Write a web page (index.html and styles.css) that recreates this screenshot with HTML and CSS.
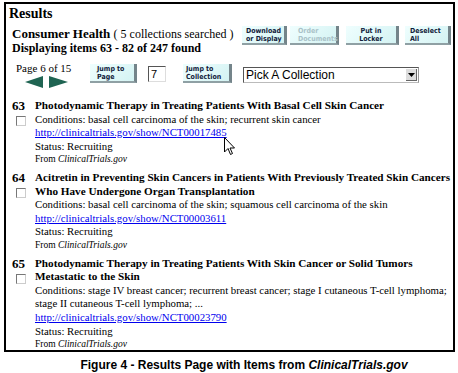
FILE: index.html
```html
<!DOCTYPE html>
<html lang="en">
<head>
  <meta charset="UTF-8">
  <title>Results</title>
  <link rel="stylesheet" href="styles.css">
</head>
<body>
  <div class="frame">
    <div class="heading">Results</div>

    <div class="top-row">
      <div class="summary">
        <div class="coll"><b>Consumer Health</b> <span class="searched">( 5 collections searched )</span></div>
        <div class="count">Displaying items 63 - 82 of 247 found</div>
      </div>
      <div class="actions">
        <span class="btn dl">Download<br>or Display</span>
        <span class="btn order off">Order<br>Documents</span>
        <span class="btn locker">Put in<br>Locker</span>
        <span class="btn desel">Deselect<br>All</span>
      </div>
    </div>

    <div class="nav-row">
      <div class="pager">
        <div class="page-of">Page 6 of 15</div>
        <div class="arrows">
          <svg width="18" height="12" viewBox="0 0 18 12"><polygon points="0,6 18,0 18,12" fill="#1f6452"/></svg>
          <svg width="19" height="12" viewBox="0 0 19 12"><polygon points="19,6 0,0 0,12" fill="#1f6452"/></svg>
        </div>
      </div>
      <span class="btn jump-page">Jump to<br>Page</span>
      <input class="page-input" type="text" value="7">
      <span class="btn jump-coll">Jump to<br>Collection</span>
      <div class="select">
        <span>Pick A Collection</span>
        <span class="drop"><svg width="7" height="4" viewBox="0 0 7 4"><polygon points="0,0 7,0 3.5,4" fill="#000"/></svg></span>
      </div>
    </div>

    <div class="item first">
      <div class="num">63</div>
      <div class="body">
        <div class="title">Photodynamic Therapy in Treating Patients With Basal Cell Skin Cancer</div>
        <div>Conditions: basal cell carcinoma of the skin; recurrent skin cancer</div>
        <div><a href="#">http://clinicaltrials.gov/show/NCT00017485</a></div>
        <div>Status: Recruiting</div>
        <div class="from">From <i>ClinicalTrials.gov</i></div>
      </div>
      <span class="box"></span>
    </div>

    <div class="item">
      <div class="num">64</div>
      <div class="body">
        <div class="title">Acitretin in Preventing Skin Cancers in Patients With Previously Treated Skin Cancers Who Have Undergone Organ Transplantation</div>
        <div>Conditions: basal cell carcinoma of the skin; squamous cell carcinoma of the skin</div>
        <div><a href="#">http://clinicaltrials.gov/show/NCT00003611</a></div>
        <div>Status: Recruiting</div>
        <div class="from">From <i>ClinicalTrials.gov</i></div>
      </div>
      <span class="box"></span>
    </div>

    <div class="item">
      <div class="num">65</div>
      <div class="body">
        <div class="title">Photodynamic Therapy in Treating Patients With Skin Cancer or Solid Tumors Metastatic to the Skin</div>
        <div>Conditions: stage IV breast cancer; recurrent breast cancer; stage I cutaneous T-cell lymphoma; stage II cutaneous T-cell lymphoma; ...</div>
        <div><a href="#">http://clinicaltrials.gov/show/NCT00023790</a></div>
        <div>Status: Recruiting</div>
        <div class="from">From <i>ClinicalTrials.gov</i></div>
      </div>
      <span class="box"></span>
    </div>

    <svg class="cursor" width="12" height="19" viewBox="0 0 12 19"><polygon points="0.5,0.5 0.5,15 4,11.5 6.5,17.5 8.5,16.5 6,11 10.5,11" fill="#fff" stroke="#000" stroke-width="1"/></svg>
  </div>

  <div class="caption">Figure 4 - Results Page with Items from <i>ClinicalTrials.gov</i></div>
</body>
</html>
```

FILE: styles.css
```css
body {
  margin: 0;
  background: #fff;
  font-family: "Liberation Serif", "Times New Roman", serif;
  font-size: 12px;
  color: #000;
}
.frame {
  position: relative;
  margin: 2px 3px 0 4px;
  border: 2px solid #000;
  height: 346px;
  padding: 0 2px 0 3px;
  overflow: hidden;
}
.heading {
  font-weight: bold;
  font-size: 14px;
  line-height: 18px;
  padding-top: 1px;
}
.top-row {
  display: flex;
  justify-content: space-between;
  padding-left: 3px;
  margin-top: 3px;
}
.coll {
  font-size: 13px;
  line-height: 15px;
}
.searched {
  font-size: 12px;
}
.count {
  font-weight: bold;
  font-size: 12px;
  line-height: 13px;
}
.actions {
  display: flex;
  margin-top: 0;
}
.btn {
  display: inline-block;
  box-sizing: border-box;
  height: 19px;
  padding: 1px 0 0 4px;
  background: linear-gradient(135deg, #effefe, #d4f3f3);
  border-right: 3px solid #74848a;
  border-bottom: 2px solid #8fa0a4;
  font-family: "DejaVu Sans Condensed", "DejaVu Sans", sans-serif;
  font-stretch: condensed;
  font-weight: bold;
  font-size: 7px;
  line-height: 8px;
  color: #10203a;
  white-space: nowrap;
}
.dl { width: 45px; }
.order { width: 49px; margin-left: 3px; padding-left: 8px; }
.locker { width: 53px; margin-left: 7px; text-align: center; padding-left: 0; }
.desel { width: 46px; margin-left: 6px; padding-left: 5px; }
.btn.off {
  color: #a9c2c8;
}
.nav-row {
  display: flex;
  align-items: flex-start;
  margin-top: 6px;
  padding-left: 7px;
}
.pager {
  width: 74px;
}
.page-of {
  font-size: 11px;
  line-height: 14px;
}
.arrows {
  display: flex;
  gap: 6px;
  padding-left: 9px;
  margin-top: 1px;
}
.jump-page {
  width: 47px;
  margin-top: 3px;
  padding-left: 7px;
}
.jump-coll {
  width: 49px;
  margin-top: 3px;
  padding-left: 3px;
}
.page-input {
  box-sizing: border-box;
  width: 18px;
  height: 16px;
  margin: 5px 17px 0 11px;
  padding: 0 0 0 2px;
  border: 1px solid #555;
  border-right-color: #ddd;
  border-bottom-color: #ddd;
  font-family: "Liberation Sans", Arial, sans-serif;
  font-size: 11px;
}
.select {
  display: flex;
  justify-content: space-between;
  align-items: center;
  box-sizing: border-box;
  width: 176px;
  height: 16px;
  margin: 6px 0 0 11px;
  border: 1px solid #555;
  border-right-color: #999;
  border-bottom-color: #bbb;
  font-family: "Liberation Sans", Arial, sans-serif;
  font-size: 12px;
  padding-left: 2px;
}
.drop {
  display: flex;
  align-items: center;
  justify-content: center;
  width: 10px;
  height: 11px;
  margin-right: 1px;
  background: #ddd;
  border-right: 1px solid #666;
  border-bottom: 1px solid #666;
}
.item {
  position: relative;
  display: flex;
  margin-top: 4px;
  padding-left: 3px;
  line-height: 13.6px;
}
.item.first {
  margin-top: 11px;
}
.num {
  width: 23px;
  font-weight: bold;
  font-size: 13px;
}
.body {
  flex: 1;
  font-size: 10.8px;
}
.title {
  font-weight: bold;
  font-size: 11.2px;
}
.from {
  font-size: 9.5px;
}
a {
  color: #0000ee;
}
.box {
  position: absolute;
  left: 7px;
  top: 17px;
  width: 8px;
  height: 8px;
  border: 1px solid #777;
  border-right-color: #ccc;
  border-bottom-color: #ccc;
}
.cursor {
  position: absolute;
  left: 218px;
  top: 133px;
}
.caption {
  margin-top: 6px;
  padding-left: 30px;
  text-align: center;
  font-family: "Liberation Sans", Arial, sans-serif;
  font-weight: bold;
  font-size: 12px;
}
```
